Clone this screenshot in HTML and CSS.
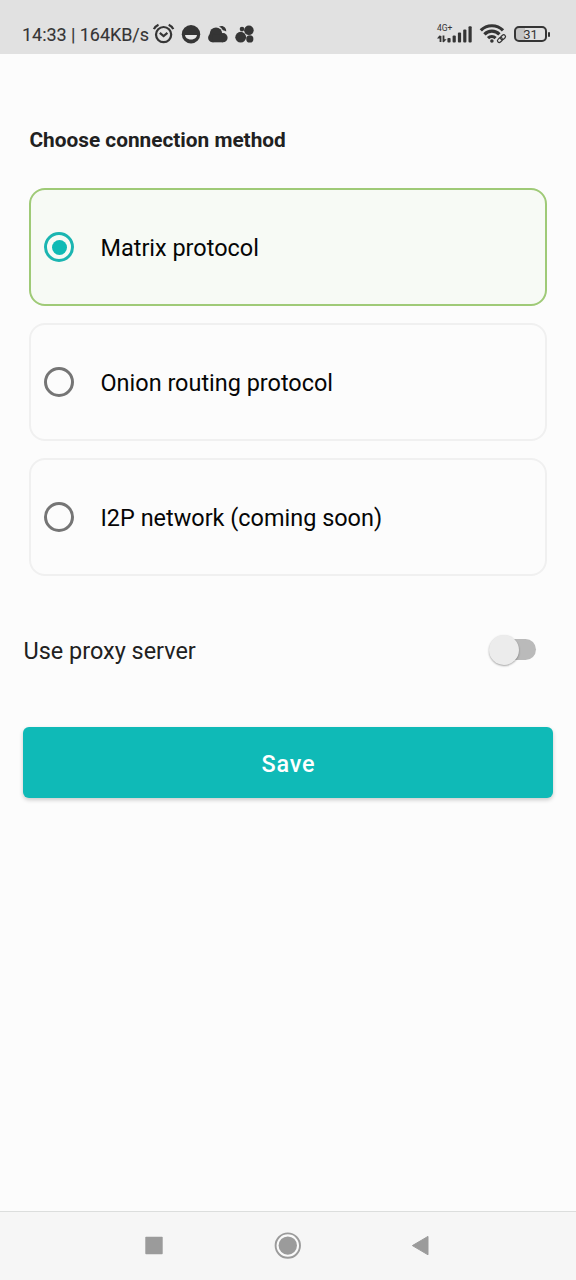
FILE: index.html
```html
<!DOCTYPE html>
<html lang="en">
<head>
<meta charset="utf-8">
<title>Connection method</title>
<link rel="stylesheet" href="styles.css">
</head>
<body>
<div class="screen">
  <header class="status">
    <span class="clock">14:33 | 164KB/s</span>
    <svg class="notices" width="106" height="26" viewBox="0 0 106 26">
      <g fill="none" stroke="#353535" stroke-width="2.2">
        <circle cx="13.6" cy="13.6" r="7.6"/>
        <path d="M9.8 11.9l3.8 3.2 3.8-3.2"/>
        <path d="M3.9 8.2q1.2-3 4.6-4.5M23.3 8.2q-1.2-3-4.6-4.5"/>
      </g>
      <g fill="#353535">
        <circle cx="41" cy="13.3" r="9.2"/>
        <circle cx="66" cy="12.8" r="6.3"/>
        <circle cx="62.6" cy="16.8" r="4.5"/>
        <circle cx="73" cy="16.7" r="4.6"/>
        <rect x="62.5" y="13.5" width="10.5" height="7.8"/>
        <path d="M69 5.6c3.3-2 7.7.5 7.2 5q-1.2-1.1-3.3-1.3-1.3-2.4-3.9-3.7z"/>
        <circle cx="90.7" cy="16.2" r="5.4"/>
        <circle cx="98.9" cy="9.3" r="4.8"/>
        <circle cx="99.8" cy="17.9" r="3.6"/>
        <circle cx="92" cy="8.1" r="2.3"/>
      </g>
      <path d="M35 13.9h12c-.6 6-11.4 6-12 0z" fill="#e8e8e8"/>
    </svg>
    <div class="signal">
      <span class="net">4G+</span>
      <svg width="36" height="18" viewBox="0 0 36 18" fill="#353535">
        <path d="M2.4 10.5 4.4 11v6H2.6v-3.6H0zM5.6 10.5h1.8v3.8h2.2L6.8 17.3l-1.2-.3z"/>
        <rect x="10.4" y="13" width="3.2" height="4.5" rx="1"/>
        <rect x="15.6" y="10.5" width="3.2" height="7" rx="1"/>
        <rect x="20.9" y="7.4" width="3.2" height="10.1" rx="1"/>
        <rect x="26.2" y="4.5" width="3.2" height="13" rx="1"/>
        <rect x="31.5" y="1.2" width="3.2" height="16.3" rx="1"/>
      </svg>
    </div>
    <svg class="wifi" width="30" height="22" viewBox="0 0 30 22" fill="none" stroke="#353535">
      <g stroke-width="3.2">
        <path d="M1.8 7.4a15.6 15.6 0 0 1 22.2 0"/>
        <path d="M5.4 11.4a10.4 10.4 0 0 1 15 0"/>
        <path d="M9 15.1a5.6 5.6 0 0 1 7.6 0"/>
      </g>
      <circle cx="12.9" cy="18" r="1.8" fill="#353535" stroke="none"/>
      <g stroke-width="1.2">
        <rect x="18.2" y="15.2" width="5.5" height="3.6" rx="1.8" transform="rotate(-42 21 17)"/>
        <rect x="21.4" y="12.5" width="5.5" height="3.6" rx="1.8" transform="rotate(-42 24 14.5)"/>
      </g>
    </svg>
    <div class="battery"><span class="cell">31</span><span class="tip"></span></div>
  </header>

  <main class="content">
    <h1 class="title">Choose connection method</h1>
    <div class="options">
      <div class="option selected"><span class="radio"></span><span class="label">Matrix protocol</span></div>
      <div class="option"><span class="radio"></span><span class="label">Onion routing protocol</span></div>
      <div class="option"><span class="radio"></span><span class="label">I2P network (coming soon)</span></div>
    </div>
    <div class="proxy">
      <span class="label">Use proxy server</span>
      <span class="switch"><span class="thumb"></span></span>
    </div>
    <button class="save">Save</button>
  </main>

  <nav class="nav">
    <svg width="28" height="28" viewBox="0 0 28 28"><rect x="5.3" y="4.8" width="17.4" height="17.4" rx=".8" fill="#9b9b9b"/></svg>
    <svg width="28" height="28" viewBox="0 0 28 28"><circle cx="14.8" cy="13.6" r="12.2" fill="#fafafa" stroke="#9b9b9b" stroke-width="1.9"/><circle cx="14.8" cy="13.6" r="9.2" fill="#9b9b9b"/></svg>
    <svg width="28" height="28" viewBox="0 0 28 28"><path d="M5.4 13.6 21 4.4v18.4z" fill="#9b9b9b" stroke="#9b9b9b" stroke-width="1" stroke-linejoin="round"/></svg>
  </nav>
</div>
</body>
</html>
```
FILE: styles.css
```css
* { box-sizing: border-box; }

body {
  margin: 0;
  font-family: Roboto, "Liberation Sans", sans-serif;
  color: #212121;
}

.screen {
  display: flex;
  flex-direction: column;
  width: 576px;
  height: 1280px;
  background: #fcfcfc;
}

.status {
  display: flex;
  align-items: center;
  height: 54px;
  padding: 14px 25px 0 22px;
  background: #e1e1e1;
  color: #353535;
}

.clock {
  width: 128px;
  font-size: 18px;
  letter-spacing: -0.05px;
  line-height: 24px;
  white-space: nowrap;
  padding-top: 2px;
  -webkit-text-stroke: 0.1px #353535;
}

.notices { flex: none; }

.signal {
  position: relative;
  width: 36px;
  height: 18px;
  margin-left: auto;
}

.signal svg { display: block; }

.net {
  position: absolute;
  top: -1px;
  left: 0;
  font-size: 8.5px;
  line-height: 8px;
}

.wifi { margin: 0 0 0 6px; }

.battery {
  display: flex;
  align-items: center;
  margin-left: 5px;
  margin-right: 1px;
}

.cell {
  width: 33px;
  height: 16px;
  border: 2px solid #353535;
  border-radius: 5px;
  background: linear-gradient(90deg, #c4c4c4 30%, transparent 30%);
  font-size: 13px;
  line-height: 13px;
  text-align: center;
}

.tip {
  width: 2px;
  height: 5px;
  margin-left: 1px;
  border-radius: 1px;
  background: #353535;
}

.content {
  flex: 1;
  padding: 72px 23px 0;
}

.title {
  margin: 0 0 34px 6.5px;
  font-size: 20.8px;
  font-weight: 700;
  line-height: 28px;
}

.options {
  display: flex;
  flex-direction: column;
  gap: 17px;
  margin: 0 6px;
}

.option {
  display: flex;
  align-items: center;
  gap: 26.5px;
  height: 118px;
  padding: 0 13px;
  border: 2px solid #f0f0f0;
  border-radius: 16px;
  color: #060606;
}

.option.selected {
  border-color: #9fca77;
  background: #f7faf5;
}

.label {
  font-size: 23.45px;
  line-height: 32px;
  white-space: nowrap;
}

.option .label { padding-top: 2px; }

.radio {
  display: grid;
  place-items: center;
  width: 30px;
  height: 30px;
  border: 3px solid #757575;
  border-radius: 50%;
}

.selected .radio {
  border-color: #1bb5b1;
}

.selected .radio::after {
  content: "";
  width: 15px;
  height: 15px;
  border-radius: 50%;
  background: #0fbab5;
}

.proxy {
  display: flex;
  align-items: center;
  justify-content: space-between;
  height: 36px;
  margin-top: 57px;
  padding: 0 17px 0 0.5px;
}

.switch {
  display: flex;
  align-items: center;
  width: 42px;
  height: 21px;
  border-radius: 11px;
  background: #bababa;
  margin: 0 0 3px;
}

.thumb {
  width: 30px;
  height: 30px;
  margin-left: -5px;
  border-radius: 50%;
  background: #ececec;
  box-shadow: 0 1px 2px rgba(0, 0, 0, 0.35);
}

.save {
  display: block;
  width: 530px;
  height: 71px;
  margin-top: 58px;
  padding: 2px 0 0 1px;
  border: 0;
  border-radius: 6px;
  background: #0fbab7;
  box-shadow: 0 2px 4px rgba(0, 0, 0, 0.2);
  color: #fff;
  font: 500 23.4px/32px Roboto, "Liberation Sans", sans-serif;
  letter-spacing: 0.8px;
}

.nav {
  display: flex;
  justify-content: space-between;
  align-items: center;
  height: 69px;
  padding: 0 141px 0 139.5px;
  border-top: 1px solid #dcdedd;
  background: #f6f6f6;
}
```
